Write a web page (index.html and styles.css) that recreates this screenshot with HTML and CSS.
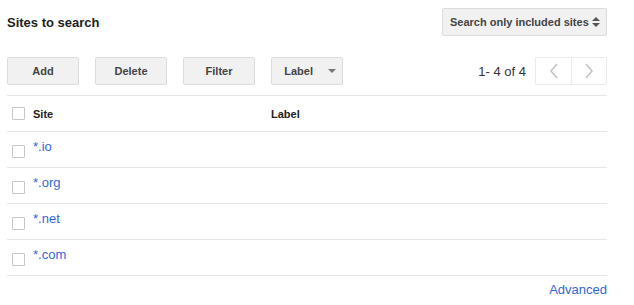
FILE: index.html
```html
<!DOCTYPE html>
<html>
<head>
<meta charset="utf-8">
<link rel="stylesheet" href="styles.css">
</head>
<body>
<div class="page">
  <div class="header">
    <h1 class="title">Sites to search</h1>
    <div class="select">
      <span>Search only included sites</span>
      <svg class="updown" width="8" height="12" viewBox="0 0 8 12"><path d="M0 5 L4 1 L8 5 Z M0 7 L4 11 L8 7 Z" fill="#555"/></svg>
    </div>
  </div>
  <div class="toolbar">
    <button class="btn">Add</button>
    <button class="btn">Delete</button>
    <button class="btn">Filter</button>
    <button class="btn btn-drop"><span>Label</span><svg class="caret" width="8" height="4" viewBox="0 0 8 4"><path d="M0 0 L8 0 L4 4 Z" fill="#777"/></svg></button>
    <div class="pager">
      <span class="count">1- 4 of 4</span>
      <div class="pager-box">
        <span class="pg"><svg width="10" height="16" viewBox="0 0 10 16"><path d="M8 1 L2 8 L8 15" fill="none" stroke="#c4c4c4" stroke-width="1.6"/></svg></span>
        <span class="pg"><svg width="10" height="16" viewBox="0 0 10 16"><path d="M2 1 L8 8 L2 15" fill="none" stroke="#c4c4c4" stroke-width="1.6"/></svg></span>
      </div>
    </div>
  </div>
  <div class="table">
    <div class="row head">
      <div class="c-site"><span class="cb"></span><span>Site</span></div>
      <div class="c-label">Label</div>
    </div>
    <div class="row">
      <div class="c-site"><span class="cb"></span><a class="link">*.io</a></div>
      <div class="c-label"></div>
    </div>
    <div class="row">
      <div class="c-site"><span class="cb"></span><a class="link">*.org</a></div>
      <div class="c-label"></div>
    </div>
    <div class="row">
      <div class="c-site"><span class="cb"></span><a class="link">*.net</a></div>
      <div class="c-label"></div>
    </div>
    <div class="row">
      <div class="c-site"><span class="cb"></span><a class="link">*.com</a></div>
      <div class="c-label"></div>
    </div>
  </div>
  <div class="footer"><a class="link">Advanced</a></div>
</div>
</body>
</html>
```
FILE: styles.css
```css
* { box-sizing: border-box; }
body {
  margin: 0;
  background: #fff;
  font-family: "Liberation Sans", Arial, sans-serif;
  color: #222;
}
.page {
  width: 600px;
  margin-left: 7px;
}
.header {
  display: flex;
  align-items: center;
  justify-content: space-between;
  padding-top: 8px;
}
.title {
  margin: 0;
  font-size: 13px;
  font-weight: bold;
  color: #222;
}
.select {
  display: flex;
  align-items: center;
  height: 28px;
  width: 165px;
  padding: 0 6px 0 7px;
  justify-content: space-between;
  background: #f1f1f1;
  border: 1px solid #dcdcdc;
  border-radius: 2px;
  font-size: 11px;
  font-weight: bold;
  color: #444;
}
.updown { display: block; }
.toolbar {
  display: flex;
  align-items: center;
  gap: 16px;
  margin-top: 21px;
  height: 28px;
}
.btn {
  width: 72px;
  height: 28px;
  background: #f1f1f1;
  border: 1px solid #dcdcdc;
  border-radius: 2px;
  font-family: "Liberation Sans", Arial, sans-serif;
  font-size: 11px;
  font-weight: bold;
  color: #444;
  padding: 0;
}
.btn-drop {
  display: flex;
  align-items: center;
  justify-content: flex-end;
  padding-right: 6px;
  gap: 15px;
}
.caret { display: block; }
.pager {
  margin-left: auto;
  display: flex;
  align-items: center;
  gap: 9px;
}
.count {
  font-size: 13px;
  color: #333;
}
.pager-box {
  display: flex;
  height: 28px;
  border: 1px solid #ebebeb;
  border-radius: 2px;
}
.pg {
  width: 35px;
  display: flex;
  align-items: center;
  justify-content: center;
}
.pg + .pg { border-left: 1px solid #ebebeb; }
.pg svg { display: block; }
.table {
  margin-top: 10px;
  border-top: 1px solid #e5e5e5;
}
.row {
  display: flex;
  height: 36px;
  border-bottom: 1px solid #e5e5e5;
  align-items: center;
}
.c-site {
  width: 264px;
  display: flex;
  align-items: center;
  padding-left: 5px;
  gap: 8px;
}
.c-label {
  font-size: 11px;
  font-weight: bold;
  color: #222;
}
.head .c-site {
  font-size: 11px;
  font-weight: bold;
  color: #222;
}
.cb {
  width: 13px;
  height: 13px;
  border: 1px solid #c6c6c6;
  border-radius: 1px;
  background: #fff;
}
.row:not(.head) .cb { margin-top: 4px; }
.link {
  font-size: 13px;
  color: #3367d6;
  text-decoration: none;
}
.row .link { margin-bottom: 6px; }
.footer {
  display: flex;
  justify-content: flex-end;
  margin-top: 6px;
}
```
